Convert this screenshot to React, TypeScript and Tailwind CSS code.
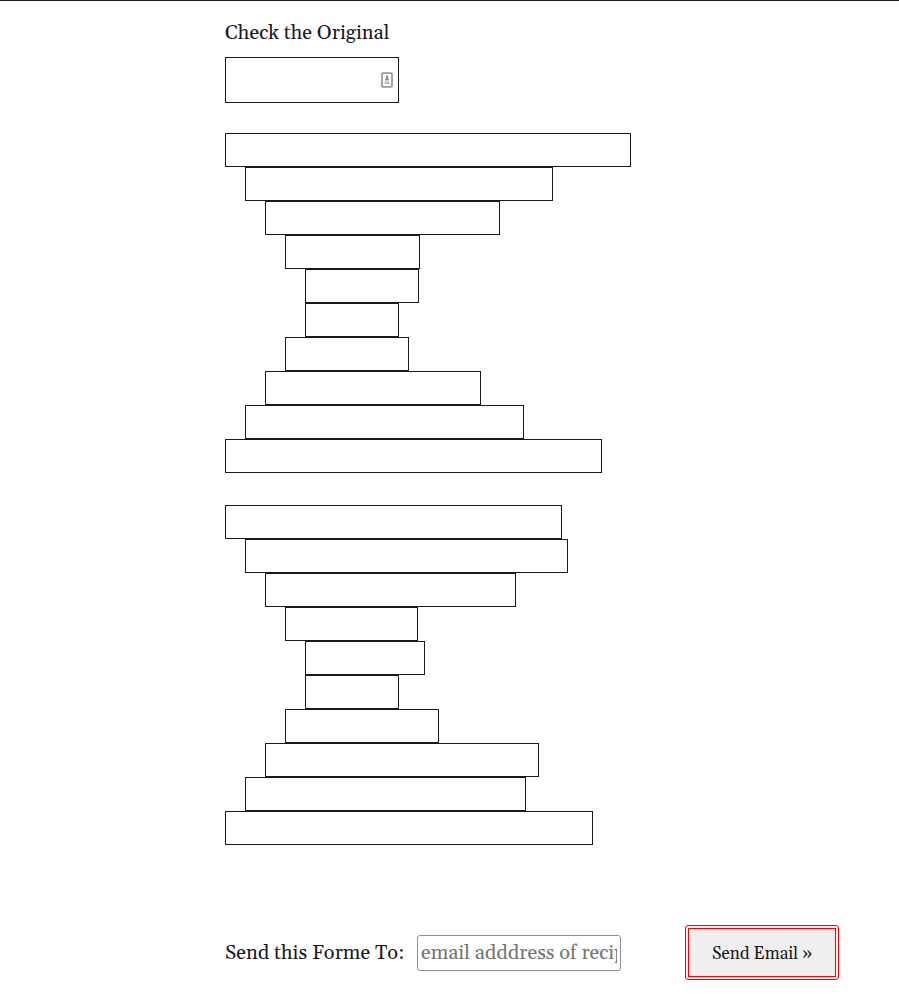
const firstStanza = [
  'w-[406px]',
  'ml-5 w-[308px]',
  'ml-10 w-[235px]',
  'ml-15 w-[135px]',
  'ml-20 w-[114px]',
  'ml-20 w-[94px]',
  'ml-15 w-[124px]',
  'ml-10 w-[216px]',
  'ml-5 w-[279px]',
  'w-[377px]',
];

const secondStanza = [
  'w-[337px]',
  'ml-5 w-[323px]',
  'ml-10 w-[251px]',
  'ml-15 w-[133px]',
  'ml-20 w-[120px]',
  'ml-20 w-[94px]',
  'ml-15 w-[154px]',
  'ml-10 w-[274px]',
  'ml-5 w-[281px]',
  'w-[368px]',
];

function Stanza({ name, lines }: { name: string; lines: string[] }) {
  return (
    <div role="group" aria-label={name} className="mb-8 flex flex-col items-start">
      {lines.map((line, i) => (
        <input
          key={i}
          type="text"
          aria-label={`${name}, line ${i + 1}`}
          className={`h-[34px] border border-[#1a1a1a] bg-white px-1 text-xl outline-none ${line}`}
        />
      ))}
    </div>
  );
}

function ContactIcon() {
  return (
    <svg viewBox="0 0 12 16" className="pointer-events-none absolute top-[15px] right-1.5 h-4 w-3" aria-hidden="true">
      <rect x="1" y="1.2" width="10" height="13.6" rx="1" fill="#fff" stroke="#999" strokeWidth="1.8" />
      <path d="M5 3.5h2v2.5l1 1v1.5H4V7l1-1z" fill="#909090" />
      <path d="M3.5 9.5h5V12h-5z" fill="#bcbcbc" />
    </svg>
  );
}

export default function App() {
  return (
    <main className="border-t border-[#1a1a1a] bg-white pb-6 pl-[225px] font-[Georgia,Gelasio,'Liberation_Serif',serif] text-[#1a1a1a]">
      <form onSubmit={(e) => e.preventDefault()}>
        <div className="mb-[30px] flex flex-col items-start gap-2 pt-4">
          <label htmlFor="title" className="text-xl leading-8">
            Check the Original
          </label>
          <div className="relative w-[174px]">
            <input
              id="title"
              type="text"
              className="block h-[46px] w-full border border-[#1a1a1a] bg-white pr-6 pl-2 text-xl outline-none"
            />
            <ContactIcon />
          </div>
        </div>

        <Stanza name="First stanza" lines={firstStanza} />
        <Stanza name="Second stanza" lines={secondStanza} />

        <div className="mt-20 flex items-center">
          <label htmlFor="recipient" className="w-48 shrink-0 text-xl leading-8 whitespace-nowrap">
            Send this Forme To:
          </label>
          <input
            id="recipient"
            type="email"
            placeholder="email adddress of recipient"
            className="h-9 w-[204px] shrink-0 rounded-[3px] border border-[#8f8f9d] bg-white px-[3px] text-xl outline-none placeholder:text-[#757575]"
          />
          <button
            type="submit"
            className="ml-16 h-[55px] w-[154px] shrink-0 rounded-[3px] border-4 border-double border-[#ff0000] bg-[#efefef] pt-1 text-[17px] whitespace-nowrap"
          >
            Send Email »
          </button>
        </div>
      </form>
    </main>
  );
}
